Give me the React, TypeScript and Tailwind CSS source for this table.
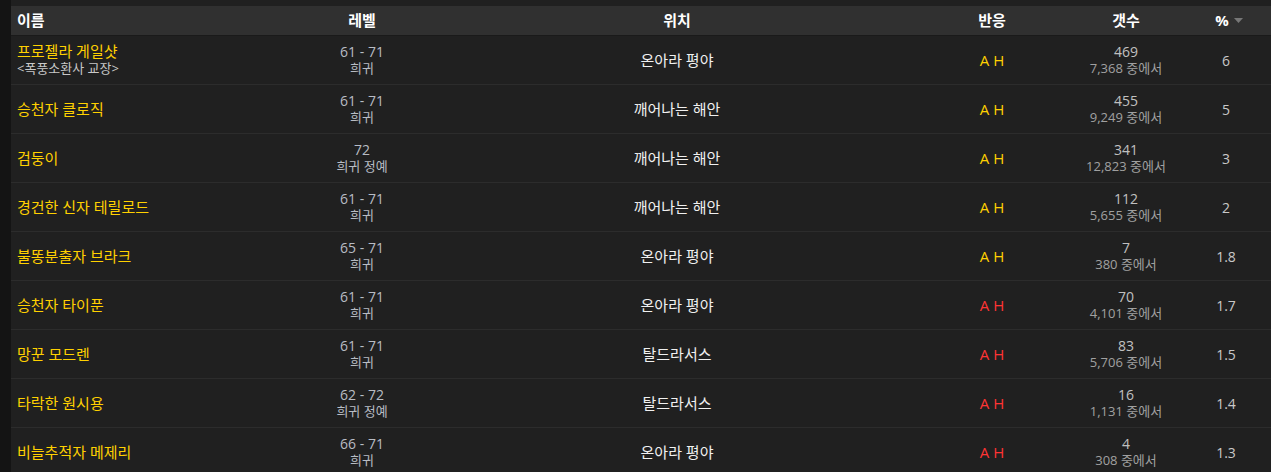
import React from 'react';

type Row = {
  name: string;
  title?: string;
  level: string;
  rank: string;
  zone: string;
  hostile: boolean;
  count: string;
  total: string;
  pct: string;
};

const rows: Row[] = [
  { name: '프로젤라 게일샷', title: '<폭풍소환사 교장>', level: '61 - 71', rank: '희귀', zone: '온아라 평야', hostile: false, count: '469', total: '7,368', pct: '6' },
  { name: '승천자 클로직', level: '61 - 71', rank: '희귀', zone: '깨어나는 해안', hostile: false, count: '455', total: '9,249', pct: '5' },
  { name: '검둥이', level: '72', rank: '희귀 정예', zone: '깨어나는 해안', hostile: false, count: '341', total: '12,823', pct: '3' },
  { name: '경건한 신자 테릴로드', level: '61 - 71', rank: '희귀', zone: '깨어나는 해안', hostile: false, count: '112', total: '5,655', pct: '2' },
  { name: '불똥분출자 브라크', level: '65 - 71', rank: '희귀', zone: '온아라 평야', hostile: false, count: '7', total: '380', pct: '1.8' },
  { name: '승천자 타이푼', level: '61 - 71', rank: '희귀', zone: '온아라 평야', hostile: true, count: '70', total: '4,101', pct: '1.7' },
  { name: '망꾼 모드렌', level: '61 - 71', rank: '희귀', zone: '탈드라서스', hostile: true, count: '83', total: '5,706', pct: '1.5' },
  { name: '타락한 원시용', level: '62 - 72', rank: '희귀 정예', zone: '탈드라서스', hostile: true, count: '16', total: '1,131', pct: '1.4' },
  { name: '비늘추적자 메제리', level: '66 - 71', rank: '희귀', zone: '온아라 평야', hostile: true, count: '4', total: '308', pct: '1.3' },
];

const cols = 'grid grid-cols-[251px_200px_430px_32px_136px_132px_68px]';

export default function App() {
  return (
    <div
      className="flex h-[472px] w-[1271px] overflow-hidden bg-[#141414] text-[14px]"
      style={{ fontFamily: '"Open Sans", "Noto Sans CJK KR", sans-serif' }}
    >
      <div className="w-[11px] shrink-0" />
      <div className="flex flex-1 flex-col bg-[#202020] pt-[6px]">
        <div className={`${cols} h-[30px] shrink-0 items-center border-b border-[#1a1a1a] bg-[#303030] text-[15px] font-bold text-white`}>
          <div className="pl-[6px]">이름</div>
          <div className="text-center">레벨</div>
          <div className="text-center">위치</div>
          <div />
          <div className="text-center">반응</div>
          <div className="text-center">갯수</div>
          <div className="flex items-center justify-center gap-[5px] pl-[6px]">
            <span>%</span>
            <svg width="9" height="5" viewBox="0 0 9 5">
              <path d="M0 0h9L4.5 5z" fill="#777" />
            </svg>
          </div>
        </div>
        {rows.map((r, i) => (
          <div key={i} className={`${cols} h-[49px] shrink-0 items-center border-b border-[#2c2c2c]`}>
            <div className="flex flex-col pl-[6px] leading-[17px]">
              <span className="text-[15px] text-[#ffd100]">{r.name}</span>
              {r.title && <span className="text-[13px] text-[#c8c8c8]">{r.title}</span>}
            </div>
            <div className="flex flex-col items-center leading-[17px]">
              <span className="text-[#b8bcc4]">{r.level}</span>
              <span className="text-[13px] text-[#b8bcc4]">{r.rank}</span>
            </div>
            <div className="text-center text-[15px] text-[#f0f0f0]">{r.zone}</div>
            <div />
            <div className={`text-center text-[15px] ${r.hostile ? 'text-[#ff3434]' : 'text-[#ffd100]'}`}>A H</div>
            <div className="flex flex-col items-center leading-[17px]">
              <span className="text-[#c0c0c0]">{r.count}</span>
              <span className="whitespace-nowrap text-[13px] text-[#a0a0a0]">{r.total} 중에서</span>
            </div>
            <div className="text-center text-[#c8c8c8]">{r.pct}</div>
          </div>
        ))}
      </div>
    </div>
  );
}
